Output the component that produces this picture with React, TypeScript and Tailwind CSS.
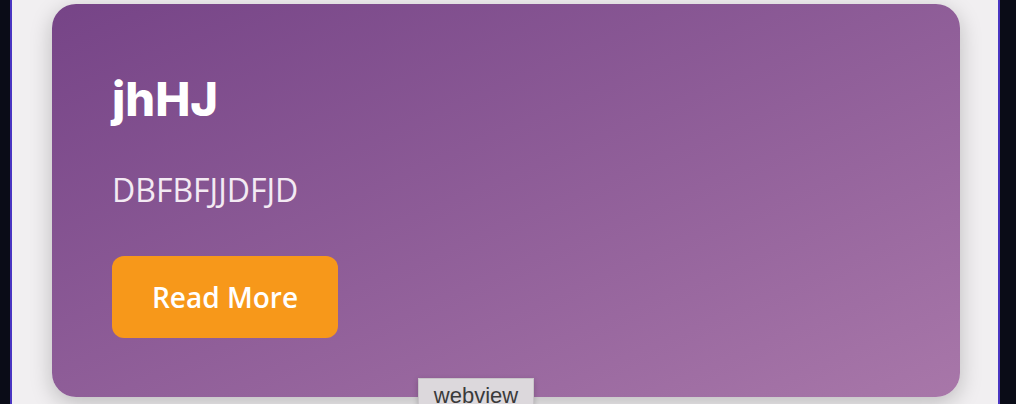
import React from "react";

const App: React.FC = () => {
  return (
    <div className="relative flex h-[404px] w-full overflow-hidden bg-[#0a0c17]">
      {/* Webview frame */}
      <div className="ml-[10px] flex h-full w-[990px] border-x-2 border-[#4a36c2] bg-[#f1eff1] pl-[40px] pr-[38px] pt-[4px]">
        {/* Card */}
        <div className="flex h-[393px] w-full flex-col items-start rounded-[24px] bg-linear-to-br from-[#764487] to-[#a877a9] pl-[60px] pt-[68px] shadow-[0_6px_22px_rgba(0,0,0,0.22)]">
          <h1 className="font-['Inter',sans-serif] text-[47px] leading-[54px] font-extrabold text-white">
            jhHJ
          </h1>
          <p className="mt-[45px] font-['Open_Sans',sans-serif] text-[32px] leading-[38px] text-[#f3eaf3]">
            DBFBFJJDFJD
          </p>
          <button className="mt-[47px] flex h-[82px] w-[226px] items-center justify-center rounded-[12px] bg-[#f7981a] font-['Open_Sans',sans-serif] text-[28px] font-semibold text-white">
            Read More
          </button>
        </div>
      </div>

      {/* Tooltip */}
      <div className="absolute left-[418px] top-[378px] flex h-[30px] w-[116px] items-start justify-center border border-[#c8c4c8] bg-[#dcd8dc] pt-[4px] font-['Liberation_Sans',sans-serif] text-[22px] leading-[26px] text-[#3a3a3a] shadow-[0_2px_6px_rgba(0,0,0,0.2)]">
        webview
      </div>
    </div>
  );
};

export default App;
